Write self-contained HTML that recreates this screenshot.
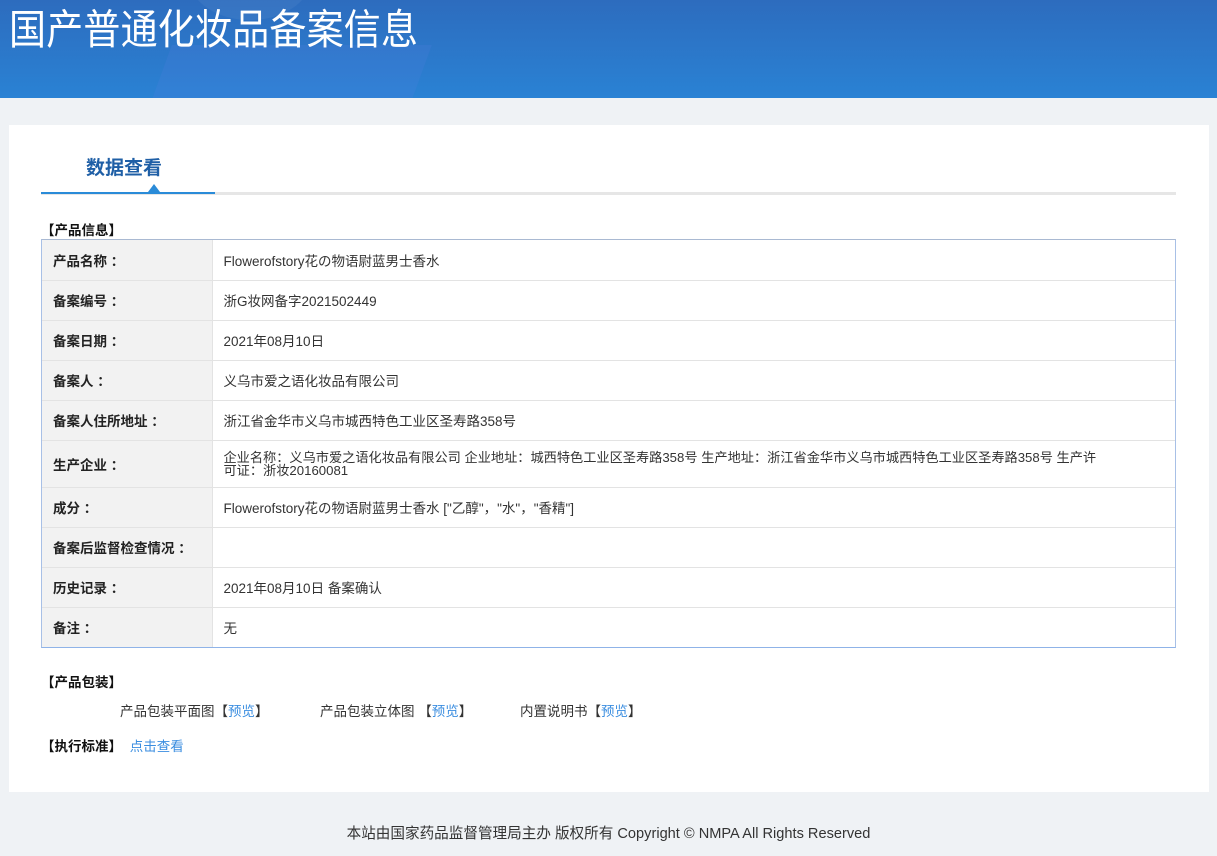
<!DOCTYPE html>
<html><head><meta charset="utf-8"><style>
*{margin:0;padding:0;box-sizing:border-box}
body{width:1217px;height:856px;background:#eff2f5;font-family:"Liberation Sans","Noto Sans CJK SC",sans-serif;font-size:13.5px;color:#333;position:relative;overflow:hidden}
.hd{position:absolute;left:0;top:0;width:1217px;height:98px;background:linear-gradient(180deg,#2d6cbe 0%,#2a82d4 100%);overflow:hidden}
.hd .s1{position:absolute;left:150px;top:45px;width:260px;height:120px;background:rgba(90,130,230,.18);transform:skewX(-20deg)}
.hd .s2{position:absolute;left:190px;top:-60px;width:120px;height:80px;border-radius:50%;background:rgba(255,255,255,.05)}
.hd h1{position:absolute;left:9px;top:-4px;font-size:37px;font-weight:normal;color:#fff;letter-spacing:0.2px;font-family:"Noto Sans CJK SC",sans-serif;transform:scaleY(1.12);transform-origin:0 0}
.main{position:absolute;left:9px;top:125px;width:1200px;height:667px;background:#fff}
.tab{position:absolute;left:32px;top:67px;width:1135px;height:3px;background:#e6e6e6}
.tab i{position:absolute;left:0;top:0;width:174px;height:2px;background:#2a8bd8}
.tab b{position:absolute;left:107px;top:-8px;width:0;height:0;border-left:6px solid transparent;border-right:6px solid transparent;border-bottom:8px solid #2a8bd8}
.tt{position:absolute;left:77px;top:28px;font-size:19px;font-weight:bold;color:#1f5fa6}
.sec{position:absolute;font-weight:bold;color:#111;font-size:13.5px}
.tw{position:absolute;left:32px;top:114px;width:1135px;border:1px solid #a9b9d2;border-bottom-color:#8fb3e8;border-left-color:#a8c0e6;border-right-color:#a8c0e6}
table{width:100%;border-collapse:collapse}
td{border:1px solid #e3e3e3;padding:0 11px;height:40px;vertical-align:middle}
tr:first-child td{border-top:none}tr:last-child td{border-bottom:none}
td:first-child{border-left:none}td:last-child{border-right:none}
td.l{width:170px;background:#f2f2f2;font-weight:bold;color:#222}
td.r div{line-height:13px;white-space:nowrap;font-size:13.2px}
a{color:#3b8ee0;text-decoration:none}
.ft{position:absolute;left:0;top:822px;width:1217px;text-align:center;font-size:14.6px;color:#333}
</style></head><body>
<div class="hd"><div class="s1"></div><div class="s2"></div><h1>国产普通化妆品备案信息</h1></div>
<div class="main">
<div class="tt">数据查看</div>
<div class="tab"><i></i><b></b></div>
<div class="sec" style="left:32px;top:94px">【产品信息】</div>
<div class="tw"><table>
<tr><td class="l">产品名称 ：</td><td>Flowerofstory花の物语尉蓝男士香水</td></tr>
<tr><td class="l">备案编号 ：</td><td>浙G妆网备字2021502449</td></tr>
<tr><td class="l">备案日期 ：</td><td>2021年08月10日</td></tr>
<tr><td class="l">备案人 ：</td><td>义乌市爱之语化妆品有限公司</td></tr>
<tr><td class="l">备案人住所地址 ：</td><td>浙江省金华市义乌市城西特色工业区圣寿路358号</td></tr>
<tr><td class="l" style="height:47px">生产企业 ：</td><td class="r"><div>企业名称：义乌市爱之语化妆品有限公司 企业地址：城西特色工业区圣寿路358号 生产地址：浙江省金华市义乌市城西特色工业区圣寿路358号 生产许<br>可证：浙妆20160081</div></td></tr>
<tr><td class="l">成分 ：</td><td>Flowerofstory花の物语尉蓝男士香水 ["乙醇"，"水"，"香精"]</td></tr>
<tr><td class="l">备案后监督检查情况 ：</td><td></td></tr>
<tr><td class="l">历史记录 ：</td><td>2021年08月10日 备案确认</td></tr>
<tr><td class="l">备注 ：</td><td>无</td></tr>
</table></div>
<div class="sec" style="left:32px;top:546px">【产品包装】</div>
<div style="position:absolute;left:111px;top:575px">产品包装平面图【<a>预览</a>】</div>
<div style="position:absolute;left:311px;top:575px">产品包装立体图 【<a>预览</a>】</div>
<div style="position:absolute;left:511px;top:575px">内置说明书【<a>预览</a>】</div>
<div class="sec" style="left:32px;top:610px">【执行标准】 <a style="font-weight:normal;margin-left:4px">点击查看</a></div>
</div>
<div class="ft">本站由国家药品监督管理局主办 版权所有 Copyright © NMPA All Rights Reserved</div>
</body></html>
